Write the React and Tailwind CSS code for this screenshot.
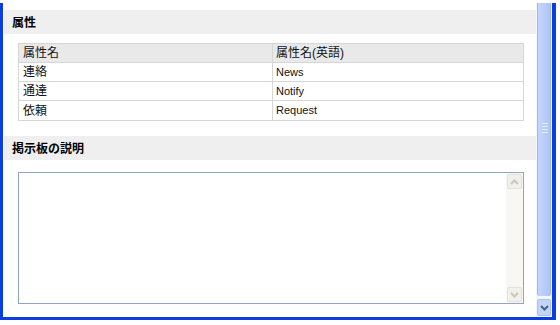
import React from "react";

const font = { fontFamily: '"Liberation Sans", "Noto Sans CJK JP", sans-serif' };

const rows = [
  ["連絡", "News"],
  ["通達", "Notify"],
  ["依頼", "Request"],
];

function SectionBar({ title }) {
  return (
    <div className="h-[24px] ml-[1px] bg-[#efefef] flex items-center pl-[8px] pt-[1px] text-[12px] font-bold text-black">
      {title}
    </div>
  );
}

function Chevron({ up, className }) {
  return (
    <svg width="9" height="6" viewBox="0 0 9 6" className={className}>
      <path
        d={up ? "M1 5 L4.5 1.5 L8 5" : "M1 1 L4.5 4.5 L8 1"}
        fill="none"
        stroke="currentColor"
        strokeWidth="2"
      />
    </svg>
  );
}

export default function App() {
  return (
    <div className="w-[560px] h-[325px] bg-white overflow-hidden pt-[3px]" style={font}>
      <div className="w-[556px] h-[317px] flex border-l-[3px] border-r-[4px] border-b-[3px] border-[#0a3de2]">
        {/* Main content */}
        <div className="flex-1 bg-white pt-[7px]">
          <SectionBar title="属性" />

          <div className="mt-[9px] ml-[15px] mr-[12px] border border-[#d6d6d6] text-[12px] text-[#111]">
            <div className="flex h-[19px] bg-[#e9e9e9] border-b border-[#d6d6d6]">
              <div className="w-[254px] pl-[4px] flex items-center border-r border-[#d6d6d6]">属性名</div>
              <div className="flex-1 pl-[3px] flex items-center">属性名(英語)</div>
            </div>
            {rows.map(([ja, en], i) => (
              <div
                key={ja}
                className={`flex h-[19px] bg-white ${i < rows.length - 1 ? "border-b border-[#d6d6d6]" : ""}`}
              >
                <div className="w-[254px] pl-[4px] flex items-center border-r border-[#d6d6d6]">{ja}</div>
                <div className="flex-1 pl-[3px] flex items-center text-[11px]">{en}</div>
              </div>
            ))}
          </div>

          <div className="mt-[15px]">
            <SectionBar title="掲示板の説明" />
          </div>

          {/* Textarea */}
          <div className="mt-[12px] ml-[15px] mr-[12px] h-[132px] border border-[#8ea6c6] flex">
            <div className="flex-1 bg-white" />
            <div className="w-[17px] bg-[#f8f7f3] flex flex-col justify-between p-[1px]">
              <div className="h-[15px] border border-[#e4e2da] bg-[#f1f0ea] flex items-center justify-center text-[#c9c7bd] rounded-[2px]">
                <Chevron up />
              </div>
              <div className="h-[15px] border border-[#e4e2da] bg-[#f1f0ea] flex items-center justify-center text-[#c9c7bd] rounded-[2px]">
                <Chevron />
              </div>
            </div>
          </div>
        </div>

        {/* Window scrollbar */}
        <div className="w-[16px] bg-[#f3f6fd] flex flex-col">
          <div className="flex-1 ml-[1px] mr-[1px] bg-gradient-to-r from-[#c5d6fc] via-[#b8cdf9] to-[#aec4f6] border-x border-[#9fb7ee] rounded-b-[2px] relative">
            <div className="absolute left-[4px] top-[120px] flex flex-col gap-[2px]">
              <div className="w-[6px] h-[1px] bg-[#e8efff]" />
              <div className="w-[6px] h-[1px] bg-[#e8efff]" />
              <div className="w-[6px] h-[1px] bg-[#e8efff]" />
              <div className="w-[6px] h-[1px] bg-[#e8efff]" />
            </div>
          </div>
          <div className="h-[17px] mt-[3px] mb-[1px] mx-[1px] rounded-[2px] bg-[#c3d4fb] border border-[#a9c0f3] flex items-center justify-center text-[#4d6185]">
            <Chevron />
          </div>
        </div>
      </div>
    </div>
  );
}
